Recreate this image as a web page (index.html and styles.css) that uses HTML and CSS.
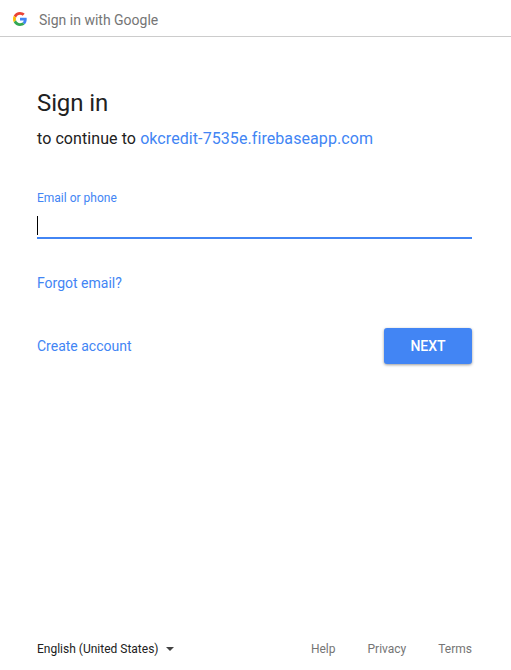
FILE: index.html
```
<!DOCTYPE html>
<html lang="en">
<head>
<meta charset="utf-8">
<title>Sign in</title>
<link rel="stylesheet" href="styles.css">
</head>
<body>
<header class="bar">
<svg class="logo" viewBox="0 0 48 48" aria-hidden="true"><path fill="#EA4335" d="M24 9.5c3.54 0 6.71 1.22 9.21 3.6l6.85-6.85C35.9 2.38 30.47 0 24 0 14.62 0 6.51 5.38 2.56 13.22l7.98 6.19C12.43 13.72 17.74 9.5 24 9.5z"/><path fill="#4285F4" d="M46.98 24.55c0-1.57-.15-3.09-.38-4.55H24v9.02h12.94c-.58 2.96-2.26 5.48-4.78 7.18l7.73 6c4.51-4.18 7.09-10.36 7.09-17.65z"/><path fill="#FBBC05" d="M10.53 28.59c-.48-1.45-.76-2.99-.76-4.59s.27-3.14.76-4.59l-7.98-6.19C.92 16.46 0 20.12 0 24c0 3.88.92 7.54 2.56 10.78l7.97-6.19z"/><path fill="#34A853" d="M24 48c6.48 0 11.93-2.13 15.89-5.81l-7.73-6c-2.15 1.45-4.92 2.3-8.16 2.3-6.26 0-11.57-4.22-13.47-9.91l-7.98 6.19C6.51 42.62 14.62 48 24 48z"/></svg>
<span>Sign in with Google</span>
</header>
<main class="content">
<h1 class="title">Sign in</h1>
<p class="subtitle">to continue to <a class="link">okcredit-7535e.firebaseapp.com</a></p>
<label class="label">Email or phone</label>
<div class="field"><span class="caret"></span></div>
<a class="link forgot">Forgot email?</a>
<div class="actions"><a class="link">Create account</a><button class="next">NEXT</button></div>
</main>
<footer class="footer">
<div class="language">English (United States)<span class="arrow"></span></div>
<nav class="links"><a>Help</a><a>Privacy</a><a>Terms</a></nav>
</footer>
</body>
</html>
```
FILE: styles.css
```
* { box-sizing: border-box; }
body { margin: 0; height: 670px; display: flex; flex-direction: column; background: #fff; color: #212121; font: 14px/20px Roboto, sans-serif; overflow: hidden; }
.bar { height: 37px; flex: none; display: flex; align-items: center; padding: 3px 0 0 13px; gap: 12px; border-bottom: 1px solid #ccc; color: #757575; }
.logo { width: 14px; height: 14px; margin-bottom: 2px; }
.content { padding: 50px 39px 0 37px; flex: 1; display: flex; flex-direction: column; }
.title { margin: 0; font: 400 24px/32px "Product Sans", Roboto, sans-serif; letter-spacing: -.12px; }
.subtitle { margin: 8px 0 0; font-size: 16px; line-height: 24px; letter-spacing: .08px; }
.link { color: #4285f4; }
.label { margin-top: 39px; font-size: 12px; line-height: 16px; color: #4285f4; }
.field { height: 33px; padding-top: 10px; border-bottom: 2px solid #4285f4; }
.caret { display: block; width: 1px; height: 19px; background: #000; }
.forgot { margin-top: 34px; }
.actions { margin-top: 35px; display: flex; align-items: center; justify-content: space-between; height: 36px; }
.next { width: 88px; height: 36px; padding: 0; border: 0; border-radius: 3px; background: #4285f4; color: #fff; font: 500 14px/36px Roboto, sans-serif; box-shadow: 0 1px 3px rgba(0,0,0,.4); }
.footer { height: 42px; padding: 0 39px 0 37px; display: flex; align-items: center; justify-content: space-between; font-size: 12px; }
.language { display: flex; align-items: center; gap: 7px; }
.arrow { border: 4px solid transparent; border-top-color: #424242; border-bottom: 0; }
.links { display: flex; gap: 32px; color: #757575; }
```
